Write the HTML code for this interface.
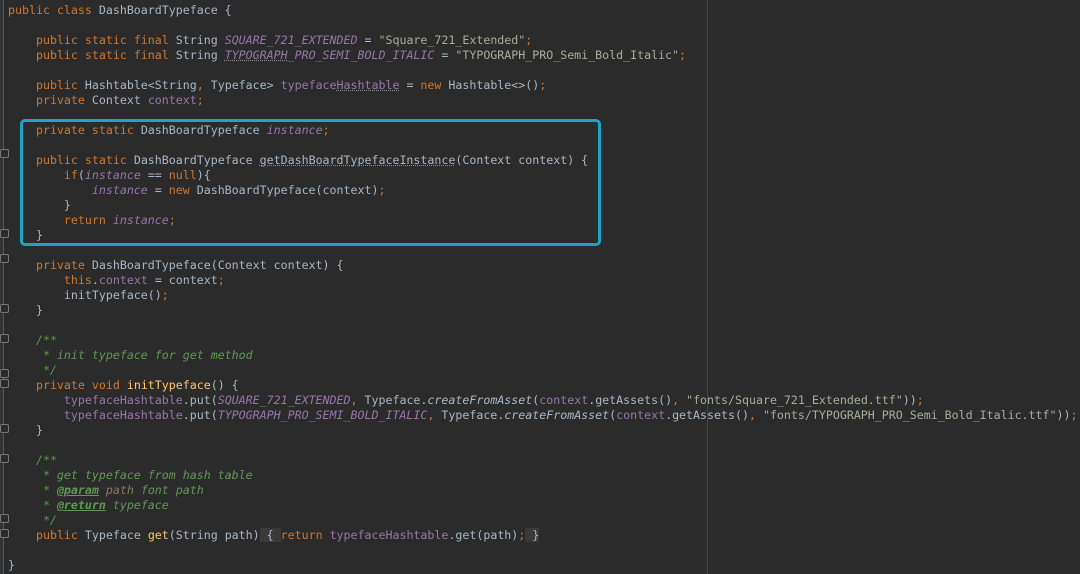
<!DOCTYPE html>
<html><head><meta charset="utf-8"><style>
html,body{margin:0;padding:0;background:#2b2b2b;width:1080px;height:574px;overflow:hidden;}
body{position:relative;}
.gut{position:absolute;left:0;top:0;width:3px;height:574px;background:#313335;border-right:1px solid #555;}
.margin{position:absolute;left:707px;top:0;width:1px;height:574px;background:#444;}
pre{position:absolute;left:8px;top:3px;margin:0;font-family:"DejaVu Sans Mono","Liberation Mono",monospace;font-size:11.62px;line-height:15px;color:#a9b7c6;white-space:pre;}
.k{color:#cc7832}.f{color:#9876aa}.i{font-style:italic}.s{color:#a7ae98}.c{color:#629755;font-style:italic}.m{color:#ffc66d}
.u{text-decoration:underline dotted #888}.t{color:#629755;font-weight:bold;font-style:italic;text-decoration:underline}.p{color:#8a7a5a;font-style:italic}
.fold{background:#3a3a3a}
.box{position:absolute;left:20px;top:119px;width:575px;height:121px;border:3px solid #1fa3c6;border-radius:5px;}
.fm{position:absolute;left:0;width:7px;height:7px;border:1px solid #777;border-radius:2px;background:#2b2b2b}
</style></head><body>
<div class="gut"></div>
<div class="margin"></div>
<div class="fm" style="top:149px"></div><div class="fm" style="top:229px"></div>
<div class="fm" style="top:254px"></div><div class="fm" style="top:304px"></div>
<div class="fm" style="top:334px"></div><div class="fm" style="top:369px"></div>
<div class="fm" style="top:379px"></div><div class="fm" style="top:424px"></div>
<div class="fm" style="top:454px"></div><div class="fm" style="top:514px"></div>
<div class="fm" style="top:529px"></div>
<pre><span class="k">public class</span> DashBoardTypeface {

    <span class="k">public static final</span> String <span class="f i">SQUARE_721_EXTENDED</span> = <span class="s">"Square_721_Extended"</span><span class="k">;</span>
    <span class="k">public static final</span> String <span class="f i"><span class="u">TYPOGRAPH</span>_PRO_SEMI_BOLD_ITALIC</span> = <span class="s">"TYPOGRAPH_PRO_Semi_Bold_Italic"</span><span class="k">;</span>

    <span class="k">public</span> Hashtable&lt;String<span class="k">,</span> Typeface&gt; <span class="f">typeface<span class="u">Hashtable</span></span> = <span class="k">new</span> Hashtable&lt;&gt;()<span class="k">;</span>
    <span class="k">private</span> Context <span class="f">context</span><span class="k">;</span>

    <span class="k">private static</span> DashBoardTypeface <span class="f i">instance</span><span class="k">;</span>

    <span class="k">public static</span> DashBoardTypeface <span class="u">getDashBoardTypefaceInstance</span>(Context context) {
        <span class="k">if</span>(<span class="f i">instance</span> == <span class="k">null</span>){
            <span class="f i">instance</span> = <span class="k">new</span> DashBoardTypeface(context)<span class="k">;</span>
        }
        <span class="k">return</span> <span class="f i">instance</span><span class="k">;</span>
    }

    <span class="k">private</span> DashBoardTypeface(Context context) {
        <span class="k">this</span>.<span class="f">context</span> = context<span class="k">;</span>
        initTypeface()<span class="k">;</span>
    }

    <span class="c">/**</span>
<span class="c">     * init typeface for get method</span>
<span class="c">     */</span>
    <span class="k">private void</span> <span class="m">initTypeface</span>() {
        <span class="f">typefaceHashtable</span>.put(<span class="f i">SQUARE_721_EXTENDED</span><span class="k">,</span> Typeface.<span class="i">createFromAsset</span>(<span class="f">context</span>.getAssets()<span class="k">,</span> <span class="s">"fonts/Square_721_Extended.ttf"</span>))<span class="k">;</span>
        <span class="f">typefaceHashtable</span>.put(<span class="f i">TYPOGRAPH_PRO_SEMI_BOLD_ITALIC</span><span class="k">,</span> Typeface.<span class="i">createFromAsset</span>(<span class="f">context</span>.getAssets()<span class="k">,</span> <span class="s">"fonts/TYPOGRAPH_PRO_Semi_Bold_Italic.ttf"</span>))<span class="k">;</span>
    }

    <span class="c">/**</span>
<span class="c">     * get typeface from hash table</span>
<span class="c">     * </span><span class="t">@param</span> <span class="p">path</span><span class="c"> font path</span>
<span class="c">     * </span><span class="t">@return</span><span class="c"> typeface</span>
<span class="c">     */</span>
    <span class="k">public</span> Typeface <span class="m">get</span>(String path)<span class="fold"> { </span><span class="k">return</span> <span class="f">typefaceHashtable</span>.get(path)<span class="k">;</span><span class="fold"> }</span>

}</pre>
<div class="box"></div>
</body></html>
